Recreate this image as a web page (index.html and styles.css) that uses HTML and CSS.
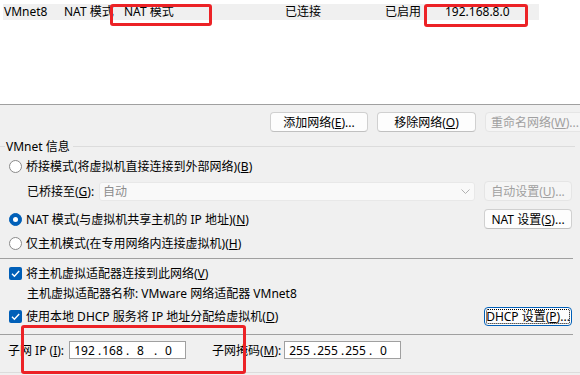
FILE: index.html
```html
<!DOCTYPE html>
<html lang="zh-CN">
<head>
    <meta charset="UTF-8">
    <meta name="viewport" content="width=device-width, initial-scale=1.0">
    <title>虚拟网络编辑器</title>
    <link rel="stylesheet" href="styles.css">
</head>
<body>
<div class="screen">
    <div class="list">
        <div class="row">
            <span>VMnet1</span><span>仅主机...</span><span>-</span><span>-</span><span>已启用</span><span>192.168.1.0</span>
        </div>
        <div class="row sel">
            <span>VMnet8</span><span>NAT 模式</span><span>NAT 模式</span><span>已连接</span><span>已启用</span><span>192.168.8.0</span>
        </div>
    </div>

    <div class="dialog">
        <div class="btn-row">
            <button class="btn w98">添加网络(<u>E</u>)...</button>
            <button class="btn w99">移除网络(<u>O</u>)</button>
            <button class="btn w100" disabled>重命名网络(<u>W</u>)...</button>
        </div>

        <div class="group-title"><span>VMnet 信息</span></div>

        <div class="opt h20">
            <span class="radio"></span>桥接模式(将虚拟机直接连接到外部网络)(<u>B</u>)
        </div>
        <div class="opt h30 sub">
            <span class="lbl">已桥接至(<u>G</u>):</span>
            <div class="combo">
                <span>自动</span>
                <svg width="9" height="5" viewBox="0 0 9 5"><path d="M0.5 0.5 L4.5 4.5 L8.5 0.5" fill="none" stroke="#b0b0b0" stroke-width="1"/></svg>
            </div>
            <button class="btn side" disabled>自动设置(<u>U</u>)...</button>
        </div>
        <div class="opt h26">
            <span class="radio on"></span>NAT 模式(与虚拟机共享主机的 IP 地址)(<u>N</u>)
            <button class="btn side push">NAT 设置(<u>S</u>)...</button>
        </div>
        <div class="opt h22">
            <span class="radio"></span>仅主机模式(在专用网络内连接虚拟机)(<u>H</u>)
        </div>

        <div class="sep"></div>

        <div class="opt h20">
            <span class="check"><svg width="13" height="13" viewBox="0 0 13 13"><path d="M3 6.8 L5.4 9.2 L10.2 4" fill="none" stroke="#fff" stroke-width="1.4"/></svg></span>将主机虚拟适配器连接到此网络(<u>V</u>)
        </div>
        <div class="opt h20 sub">主机虚拟适配器名称: VMware 网络适配器 VMnet8</div>
        <div class="opt h26">
            <span class="check"><svg width="13" height="13" viewBox="0 0 13 13"><path d="M3 6.8 L5.4 9.2 L10.2 4" fill="none" stroke="#fff" stroke-width="1.4"/></svg></span>使用本地 DHCP 服务将 IP 地址分配给虚拟机(<u>D</u>)
            <button class="btn side push focus">DHCP 设置(<u>P</u>)...</button>
        </div>

        <div class="sep sep2"></div>

        <div class="subnet">
            <span class="ip-lbl">子网 IP (<u>I</u>):</span>
            <div class="ip">
                <span class="oct">192</span><span class="dot">.</span><span class="oct">168</span><span class="dot">.</span><span class="oct">8</span><span class="dot">.</span><span class="oct">0</span>
            </div>
            <span class="mask-lbl">子网掩码(<u>M</u>):</span>
            <div class="ip">
                <span class="oct">255</span><span class="dot">.</span><span class="oct">255</span><span class="dot">.</span><span class="oct">255</span><span class="dot">.</span><span class="oct">0</span>
            </div>
        </div>

        <div class="bottom-line"></div>
    </div>

    <!-- annotation boxes drawn over the screenshot -->
    <div class="mark mark-a"></div>
    <div class="mark mark-b"></div>
    <div class="mark mark-c"></div>
</div>
</body>
</html>
```

FILE: styles.css
```css
* { box-sizing: border-box; }
body {
    margin: 0;
    font-family: "Noto Sans", "Noto Sans CJK SC", sans-serif;
    font-size: 12px;
    color: #000;
    background: #f0f0f0;
}
.screen {
    position: relative;
    width: 580px;
    height: 375px;
    overflow: hidden;
}
u { text-decoration: underline; text-underline-offset: 1px; }

/* network list */
.list {
    height: 105px;
    background: #fff;
    border-bottom: 1px solid #a0a0a0;
    overflow: hidden;
}
.row {
    display: grid;
    grid-template-columns: 60px 60px 161px 100px 60px 1fr;
    width: 536px;
    height: 16px;
    margin-left: 3px;
    padding-left: 1px;
    line-height: 16px;
    white-space: nowrap;
}
.row:first-child { margin-top: -12px; line-height: 14px; }
.row.sel { background: #f0f0f0; }

/* dialog */
.dialog { background: #f0f0f0; }
.btn-row {
    display: flex;
    gap: 9px;
    padding: 7px 0 0 270px;
    height: 27px;
    white-space: nowrap;
}
.btn {
    height: 20px;
    padding: 0;
    font: inherit;
    color: #000;
    background: #fdfdfd;
    border: 1px solid #d0d0d0;
    border-bottom-color: #c0c0c0;
    border-radius: 4px;
    text-align: center;
    line-height: 17px;
    flex-shrink: 0;
}
.btn:disabled {
    color: #a0a0a0;
    background: #f5f5f5;
    border-color: #e5e5e5;
}
.w98 { width: 98px; }
.w99 { width: 99px; }
.w100 { width: 100px; }
.side { width: 88px; }
.push { margin-left: auto; margin-right: 8px; }
.focus {
    border: 1px solid #005fb8;
    outline: 1px dotted #000;
    outline-offset: -3px;
    height: 19px;
}

.group-title {
    display: flex;
    align-items: center;
    height: 20px;
    margin-top: 4px;
}
.group-title::before {
    content: "";
    width: 5px;
    border-top: 1px solid #dcdcdc;
}
.group-title span { padding: 0 3px 0 1px; }
.group-title::after {
    content: "";
    flex: 1;
    border-top: 1px solid #dcdcdc;
    margin-right: 5px;
}

.opt {
    display: flex;
    align-items: center;
    padding-left: 9px;
    white-space: nowrap;
}
.h20 { height: 20px; }
.h22 { height: 22px; }
.h26 { height: 26px; }
.h30 { height: 30px; }
.sub { padding-left: 27px; }

.radio {
    width: 13px;
    height: 13px;
    margin-right: 4px;
    border: 1px solid #8a8a8a;
    border-radius: 50%;
    background: #fff;
    flex-shrink: 0;
}
.radio.on {
    background: #005fb8;
    border-color: #005fb8;
    display: flex;
    align-items: center;
    justify-content: center;
}
.radio.on::after {
    content: "";
    width: 5px;
    height: 5px;
    border-radius: 50%;
    background: #fff;
}
.check {
    width: 13px;
    height: 13px;
    margin-right: 4px;
    border-radius: 2px;
    background: #005fb8;
    flex-shrink: 0;
}
.check svg { display: block; }

.lbl { width: 72px; }
.combo {
    display: flex;
    align-items: center;
    justify-content: space-between;
    width: 376px;
    height: 19px;
    margin-right: 9px;
    padding: 0 4px 0 3px;
    color: #8c8c8c;
    background: #f9f9f9;
    border: 1px solid #e8e8e8;
    border-radius: 3px;
}

.sep {
    height: 1px;
    margin: 4px 7px 4px 0;
    background: #a0a0a0;
}
.sep2 { margin-top: 5px; }

.subnet {
    display: flex;
    align-items: center;
    height: 22px;
    padding-left: 8px;
    white-space: nowrap;
}
.ip-lbl { width: 61px; }
.mask-lbl { width: 72px; margin-left: 26px; }
.ip {
    display: flex;
    align-items: center;
    width: 117px;
    height: 18px;
    padding-left: 3px;
    background: #fff;
    border: 1px solid #a0a0a0;
}
.oct { width: 23px; text-align: center; }
.dot { width: 5px; padding-left: 2px; }

.bottom-line {
    height: 1px;
    margin-top: 11px;
    background: #dcdcdc;
}

/* red annotation boxes */
.mark {
    position: absolute;
    border: 3px solid #ec2226;
    border-radius: 3px;
}
.mark-a { left: 110px; top: 4px; width: 102px; height: 22px; }
.mark-b { left: 424px; top: 4px; width: 104px; height: 23px; }
.mark-c { left: 21px; top: 325px; width: 225px; height: 49px; }
```
